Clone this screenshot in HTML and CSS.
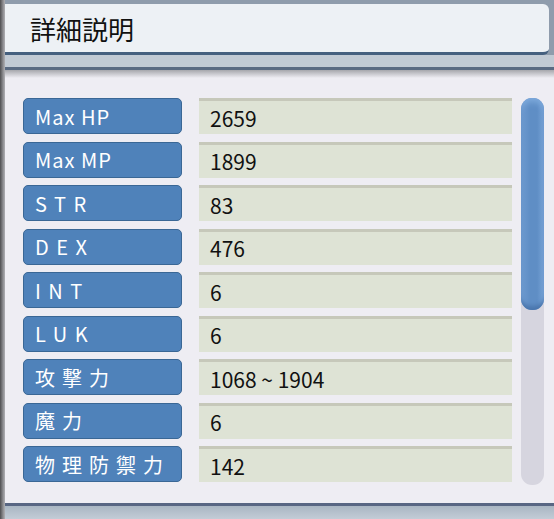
FILE: index.html
```html
<!DOCTYPE html>
<html lang="ja">
<head>
<meta charset="utf-8">
<link rel="stylesheet" href="styles.css">
</head>
<body>
<div class="window">
  <div class="edge"></div>
  <div class="main">
    <div class="top">
      <div class="header">詳細説明</div>
    </div>
    <div class="band"></div>
    <div class="line"></div>
    <div class="shade"></div>
    <div class="content">
      <div class="list">
        <div class="row"><div class="label latin">Max HP</div><div class="value">2659</div></div>
        <div class="row"><div class="label latin">Max MP</div><div class="value">1899</div></div>
        <div class="row"><div class="label wide">STR</div><div class="value">83</div></div>
        <div class="row"><div class="label wide">DEX</div><div class="value">476</div></div>
        <div class="row"><div class="label wide">INT</div><div class="value">6</div></div>
        <div class="row"><div class="label wide">LUK</div><div class="value">6</div></div>
        <div class="row"><div class="label kanji">攻撃力</div><div class="value">1068 ~ 1904</div></div>
        <div class="row"><div class="label kanji">魔力</div><div class="value">6</div></div>
        <div class="row"><div class="label kanji">物理防禦力</div><div class="value">142</div></div>
      </div>
      <div class="scroll"><div class="thumb"></div></div>
    </div>
    <div class="bline"></div>
    <div class="bband"></div>
  </div>
</div>
</body>
</html>
```
FILE: styles.css
```css
html, body {
  margin: 0;
  padding: 0;
}
body {
  width: 554px;
  height: 519px;
  overflow: hidden;
  background: #eeedf3;
  font-family: "Noto Sans CJK JP", "Noto Sans", sans-serif;
}
.window {
  display: flex;
  height: 519px;
}
.edge {
  width: 5px;
  background: linear-gradient(to right, #4e4e50, #8c8c90 60%, #b0b0b4);
}
.main {
  flex: 1;
  display: flex;
  flex-direction: column;
}
.top {
  background: #8f9cac;
  padding: 4px 5px 0 0;
}
.header {
  height: 48px;
  background: #edf1f5;
  border-bottom: 3px solid #45607f;
  border-radius: 0 6px 6px 0;
  padding-left: 25px;
  display: flex;
  align-items: center;
  font-size: 26px;
  color: #111;
}
.band {
  height: 12px;
  background: #c1cad4;
}
.line {
  height: 3px;
  background: #596a82;
}
.shade {
  height: 8px;
  background: linear-gradient(#a6a7ac, #eeedf3);
}
.content {
  flex: 1;
  display: flex;
  padding: 20px 0 0 18px;
}
.list {
  width: 489px;
  display: flex;
  flex-direction: column;
  gap: 7.5px;
}
.row {
  display: flex;
  gap: 17px;
  height: 36px;
}
.label {
  width: 159px;
  box-sizing: border-box;
  background: #4f82ba;
  border: 1px solid #3a6795;
  border-radius: 5px;
  color: #fff;
  font-size: 20px;
  padding-left: 11px;
  display: flex;
  align-items: center;
}
.label.latin {
  letter-spacing: 1px;
}
.label.wide {
  letter-spacing: 7.5px;
}
.label.kanji {
  letter-spacing: 7px;
}
.value {
  flex: 1;
  box-sizing: border-box;
  background: #dee3d5;
  border-top: 3px solid #c6c8ba;
  padding-left: 11px;
  font-size: 21px;
  color: #111;
  display: flex;
  align-items: center;
}
.scroll {
  margin-left: 9px;
  width: 23px;
  height: 387px;
  background: #d6d5df;
  border-radius: 11px;
}
.thumb {
  height: 212px;
  border-radius: 11px;
  background: linear-gradient(to right, #6f9bd0, #5f8ec5 40%, #5f8ec5 70%, #77a3d6);
  box-shadow: inset 0 -6px 4px -2px #4a76ad, inset 0 8px 6px -4px #7eaadc;
}
.bline {
  height: 3px;
  background: #586683;
}
.bband {
  height: 13px;
  background: linear-gradient(#a9b6c3, #c3ccd6);
}
```
